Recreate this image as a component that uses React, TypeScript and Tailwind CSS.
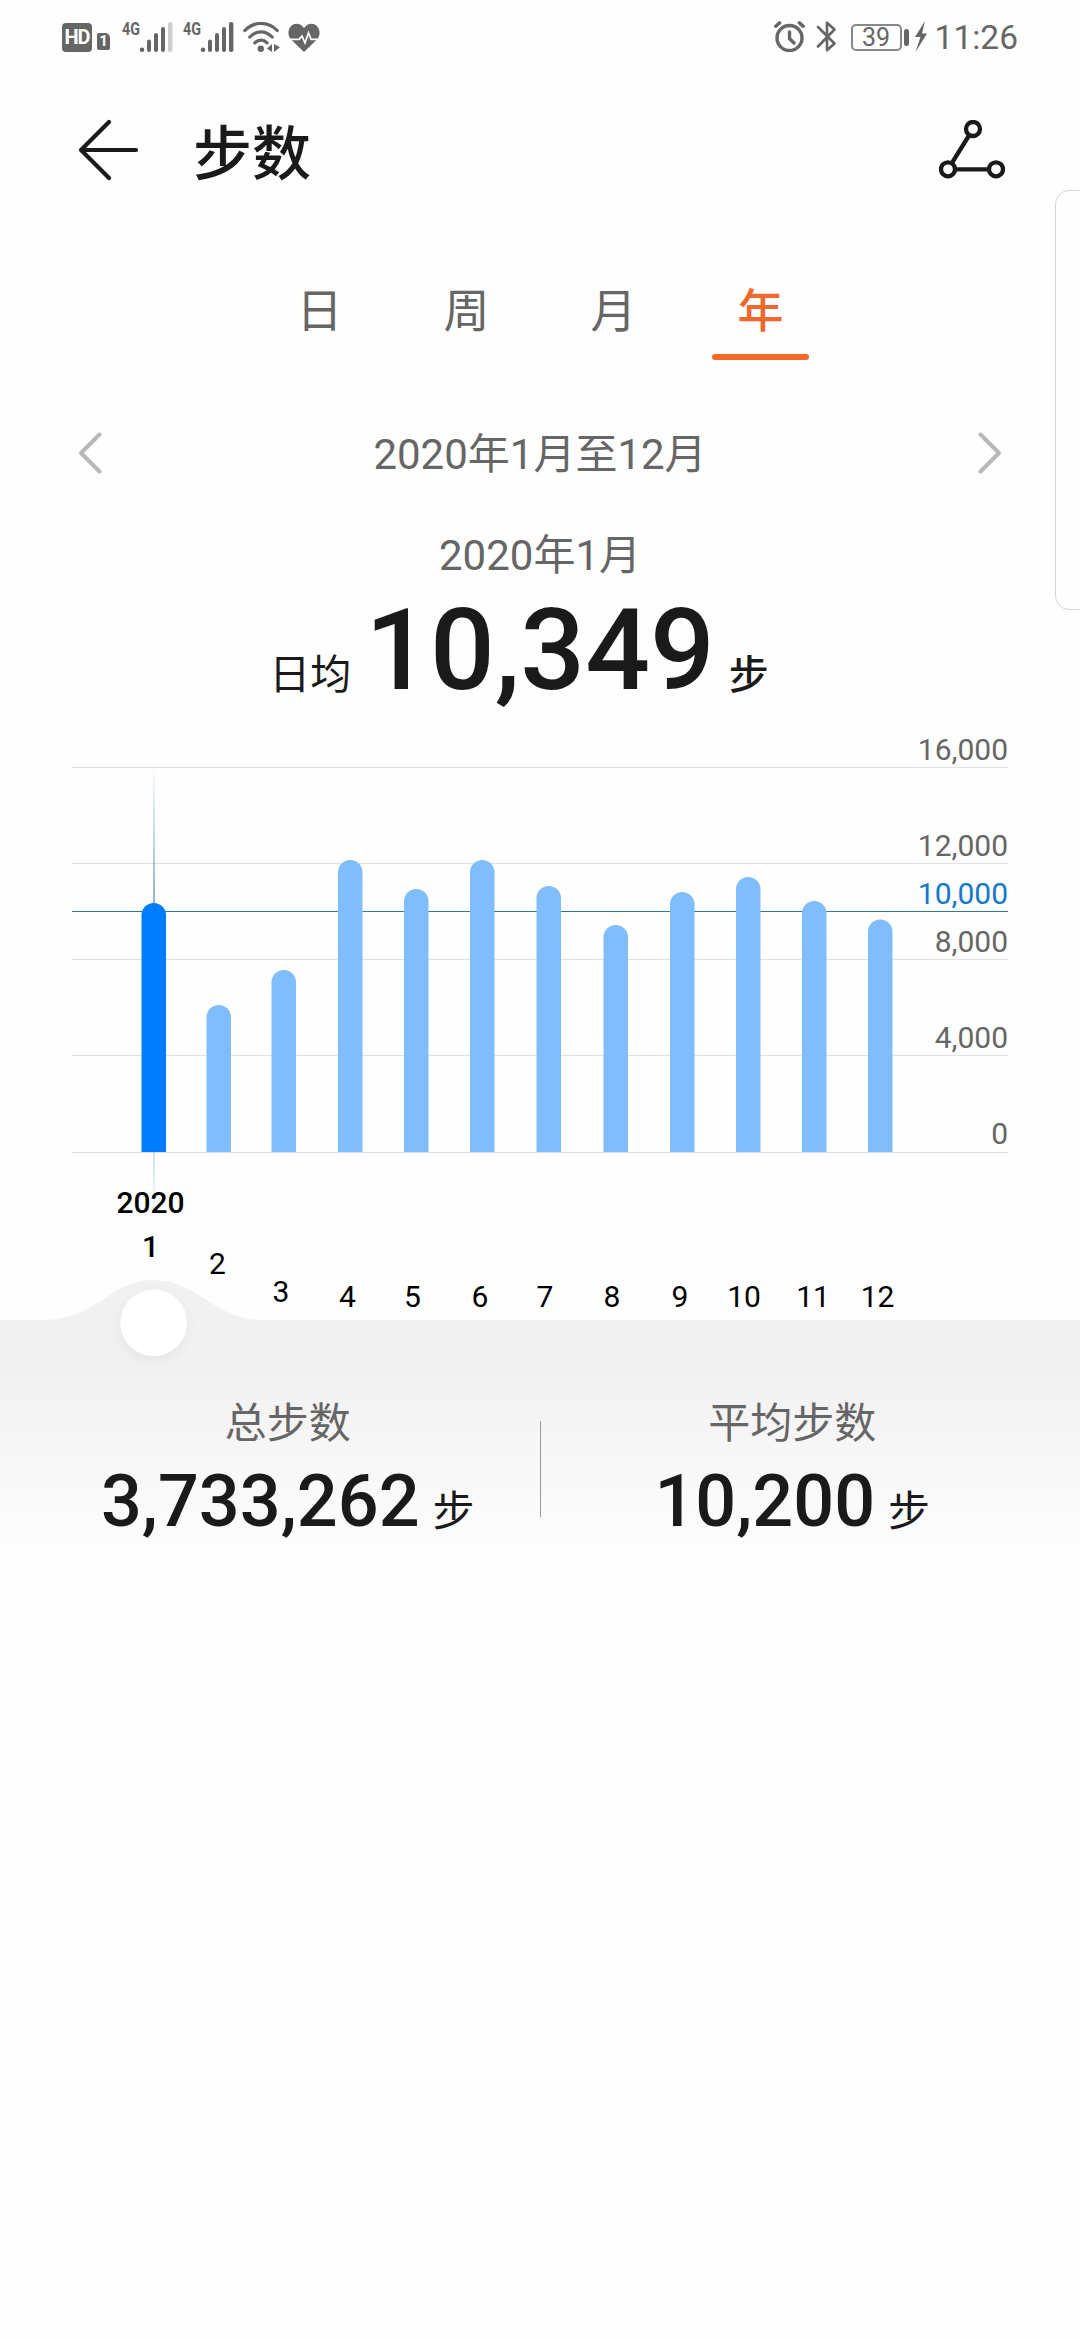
import React from 'react';

const MONTHS = [
  { label: '1', x: 141.5, top: 903, tx: 150.5, ty: 1257 },
  { label: '2', x: 206.5, top: 1005, tx: 217.5, ty: 1274 },
  { label: '3', x: 271.5, top: 970, tx: 281, ty: 1302 },
  { label: '4', x: 338, top: 860, tx: 347.5, ty: 1307 },
  { label: '5', x: 404, top: 889, tx: 412.5, ty: 1307 },
  { label: '6', x: 470, top: 860, tx: 480, ty: 1307 },
  { label: '7', x: 536.5, top: 886, tx: 545, ty: 1307 },
  { label: '8', x: 603.5, top: 925, tx: 612, ty: 1307 },
  { label: '9', x: 670, top: 892, tx: 680, ty: 1307 },
  { label: '10', x: 736, top: 877, tx: 744, ty: 1307 },
  { label: '11', x: 802, top: 901, tx: 813, ty: 1307 },
  { label: '12', x: 868, top: 919.5, tx: 877.5, ty: 1307 },
];

const GRID = [
  { label: '16,000', y: 767, ty: 760 },
  { label: '12,000', y: 863, ty: 856 },
  { label: '8,000', y: 959, ty: 952 },
  { label: '4,000', y: 1055, ty: 1048 },
  { label: '0', y: 1152, ty: 1144 },
];

const TABS = ['日', '周', '月', '年'];

function Signal({ full }: { full: boolean }) {
  return (
    <svg className="overflow-visible" width="51" height="30" viewBox="0 0 51 30" fill="#666">
      <text x="0" y="13.2" fontSize="18" fontWeight="700" textLength="18" lengthAdjust="spacingAndGlyphs">
        4G
      </text>
      <circle cx="20" cy="27.7" r="2.3" />
      <rect x="25" y="17.5" width="4" height="12.5" rx="2" />
      <rect x="32" y="11" width="4" height="19" rx="2" />
      <rect x="39" y="5" width="4" height="25" rx="2" />
      <rect x="46" y="0" width="4.4" height="30" rx="2" fill={full ? '#666' : '#cfcfcf'} />
    </svg>
  );
}

function StatusBar() {
  return (
    <div className="flex h-[76px] items-start justify-between pt-[22px] pr-[62px] pl-[62px] text-[#666]">
      <div className="flex h-[30px] items-end">
        <div className="mr-[5px] flex h-[29px] w-[30px] items-center justify-center rounded-[4px] bg-[#666] text-[20px] leading-[29px] font-bold tracking-[-1px] text-white">
          HD
        </div>
        <div className="mr-[12px] mb-[2px] flex h-[17px] w-[13px] items-center justify-center rounded-[2px] rounded-tr-[5px] bg-[#666] text-[15px] leading-[17px] font-bold text-white">
          1
        </div>
        <div className="mr-[10px]">
          <Signal full={false} />
        </div>
        <div className="mr-[9px]">
          <Signal full />
        </div>
        <svg className="mr-[8px]" width="37" height="30" viewBox="0 0 37 30" fill="none" stroke="#666" strokeWidth="3.2" strokeLinecap="round">
          <path d="M1.8 8.500C11-.9 25-.9 34.2 8.500" />
          <path d="M6.8 15C13.5 8.1 22.5 8.1 29.2 15" />
          <path d="M11.8 20.8C15.5 17.2 20.5 17.2 24 20.8" />
          <circle cx="17.8" cy="26.8" r="3.2" fill="#666" stroke="none" />
          <path d="M29 22v8l-5-3.600zM31 22v8l6-4.800z" fill="#666" stroke="none" />
        </svg>
        <svg width="32" height="30" viewBox="0 0 32 30">
          <path d="M16 30L3 17.5C-1 13 0 6 4 3.2C8 .5 13 1.5 16 6C19 1.5 24 .5 28 3.2C32 6 33 13 29 17.5z" fill="#666" />
          <path d="M0 17.4h11l3-3.4 3 7 3.5-10 2.5 6.4h9" fill="none" stroke="#fff" strokeWidth="1.7" />
        </svg>
      </div>

      <div className="flex h-[30px] items-end">
        <svg className="mr-[11px]" width="31" height="31" viewBox="0 0 31 31" fill="none" stroke="#666" strokeWidth="3.4" strokeLinecap="round">
          <circle cx="15.5" cy="17" r="12.5" />
          <path d="M15.5 11v6.5l4.5 4.5M1.800 5.200L5.600 1.900M29.200 5.200L25.400 1.900" />
        </svg>
        <svg className="mr-[14px]" width="21" height="31" viewBox="0 0 21 31" fill="none" stroke="#666" strokeWidth="2.6" strokeLinejoin="round" strokeLinecap="round">
          <path d="M2 6L18.5 22.5 11 29.2V1.8L18.5 8.5 2 25.500" />
        </svg>
        <div className="mr-[2px] mb-px flex h-[27px] w-[51px] items-center justify-center rounded-[5px] border-2 border-[#888] text-[25px] leading-none">
          39
        </div>
        <div className="mr-[5px] mb-[6px] h-[17px] w-[5px] rounded-full bg-[#666]" />
        <svg className="mr-[7px]" width="14" height="31" viewBox="0 0 14 31" fill="#666">
          <path d="M11 0L1 16h5.500L1.500 31 13 12.500H8z" />
        </svg>
        <span className="text-[33.500px] leading-[28px]">11:26</span>
      </div>
    </div>
  );
}

function Chart() {
  return (
    <svg
      className="relative z-10 block overflow-visible"
      width="1080"
      height="613"
      viewBox="0 707 1080 613"
      fontSize="30"
    >
      <defs>
        <linearGradient id="cursor" x1="0" y1="767" x2="0" y2="1222" gradientUnits="userSpaceOnUse">
          <stop offset="0" stopColor="#3d7fae" stopOpacity="0" />
          <stop offset="0.45" stopColor="#3d7fae" stopOpacity="0.9" />
          <stop offset="1" stopColor="#3d8fbe" stopOpacity="0" />
        </linearGradient>
        <filter id="thumb" x="-50%" y="-50%" width="200%" height="200%">
          <feDropShadow dx="0" dy="4" stdDeviation="6" floodColor="#000" floodOpacity="0.05" />
        </filter>
      </defs>

      {GRID.map((g) => (
        <g key={g.label}>
          <rect x="72" y={g.y} width="936" height="1" fill="#e0e2e2" />
          <text x="1008" y={g.ty} textAnchor="end" fill="#666">
            {g.label}
          </text>
        </g>
      ))}

      {/* Daily goal */}
      <rect x="72" y="911" width="936" height="1" fill="#2f7ba0" />
      <text x="1008" y="904" textAnchor="end" fill="#1377d0">
        10,000
      </text>

      <rect x="153" y="767" width="2" height="455" fill="url(#cursor)" />

      {MONTHS.map((m, i) => (
        <path
          key={m.label}
          d={`M${m.x} 1152V${m.top + 12.25}a12.25 12.25 0 0 1 24.5 0V1152z`}
          fill={i === 0 ? '#007dff' : '#80bdff'}
        />
      ))}

      <g fill="#000" textAnchor="middle">
        <text x="150.5" y="1213" fontWeight="500">
          2020
        </text>
        {MONTHS.map((m, i) => (
          <text key={m.label} x={m.tx} y={m.ty} fontWeight={i === 0 ? 500 : 400}>
            {m.label}
          </text>
        ))}
      </g>

      {/* Slider bump and thumb */}
      <path d="M44 1320C96 1320 109 1280 153.5 1280S214 1320 263 1320z" fill="#f1f1f1" />
      <circle cx="153.7" cy="1322.7" r="33.300" fill="#fff" filter="url(#thumb)" />
    </svg>
  );
}

function Total({ title, value }: { title: string; value: string }) {
  return (
    <div className="flex flex-1 flex-col items-center">
      <div className="text-[42px] leading-[60px] text-[#666]">{title}</div>
      <div className="mt-[12px] flex items-baseline leading-[72px]">
        <span className="text-[72px] font-medium">{value}</span>
        <span className="ml-[13px] text-[42px]">步</span>
      </div>
    </div>
  );
}

export default function App() {
  return (
    <div className="relative h-[2340px] w-[1080px] overflow-hidden bg-[#fefefe] font-[Roboto,'Noto_Sans_CJK_SC',sans-serif] text-[#1a1a1a]">
      <StatusBar />

      <header className="flex h-[148px] items-center pr-[75px] pl-[78px]">
        <svg width="61" height="62" viewBox="0 0 61 62" fill="none" stroke="#1a1a1a" strokeWidth="4.2" strokeLinecap="round" strokeLinejoin="round">
          <path d="M58 31H3M31 3L3 31L31 59" />
        </svg>
        <h1 className="mt-[10px] ml-[54px] flex-1 text-[59px] leading-[80px] font-medium">步数</h1>
        <svg width="66" height="60" viewBox="0 0 66 60" fill="none" stroke="#1a1a1a" strokeWidth="4.3">
          <circle cx="34" cy="9" r="7" />
          <circle cx="9" cy="49.3" r="7" />
          <circle cx="57" cy="49.3" r="7" />
          <path d="M30.3 15L12.7 43.3M16 49.3H50" />
        </svg>
      </header>

      <nav className="flex gap-[50px] pt-[57px] pl-[271px]">
        {TABS.map((tab, i) => (
          <div key={tab} className="flex w-[97px] flex-col items-center gap-[13px]">
            <span
              className={
                i === 3
                  ? 'text-[46px] leading-[60px] font-medium text-[#f0692c]'
                  : 'text-[46px] leading-[60px] text-[#666]'
              }
            >
              {tab}
            </span>
            {i === 3 && <div className="h-[6px] w-full rounded-full bg-[#f56a2a]" />}
          </div>
        ))}
      </nav>

      <div className="mt-[65px] flex h-[60px] items-center justify-between px-[78px] text-[42px] leading-[60px] text-[#666]">
        <svg className="mb-1" width="24" height="44" viewBox="0 0 24 44" fill="none" stroke="#b8b8b8" strokeWidth="4" strokeLinecap="round" strokeLinejoin="round">
          <path d="M21.5 3.5L3 22L21.5 40.5" />
        </svg>
        <span>2020年1月至12月</span>
        <svg className="mb-1" width="24" height="44" viewBox="0 0 24 44" fill="none" stroke="#b8b8b8" strokeWidth="4" strokeLinecap="round" strokeLinejoin="round">
          <path d="M2.5 3.5L21 22L2.5 40.5" />
        </svg>
      </div>

      <div className="mt-[41px] text-center text-[42px] leading-[60px] text-[#666]">2020年1月</div>

      <div className="mt-[7px] flex h-[114px] items-baseline leading-[114px]">
        <span className="flex-1 pr-[14px] text-right text-[41px]">日均</span>
        <span className="text-[114px] font-medium">10,349</span>
        <span className="flex-1 pl-[14px] text-[40px] font-medium">步</span>
      </div>

      <Chart />

      <section className="flex h-[240px] items-start bg-linear-to-b from-[#f1f1f1] from-20% to-[#fefefe] px-[36px] pt-[74px]">
        <Total title="总步数" value="3,733,262" />
        <div className="mt-[27px] h-[96px] w-px bg-[#999]" />
        <Total title="平均步数" value="10,200" />
      </section>

      {/* Edge drawer handle, half off screen */}
      <div className="absolute top-[190px] -right-[20px] h-[420px] w-[45px] rounded-[14px] border border-[#d6d6d6]" />
    </div>
  );
}
